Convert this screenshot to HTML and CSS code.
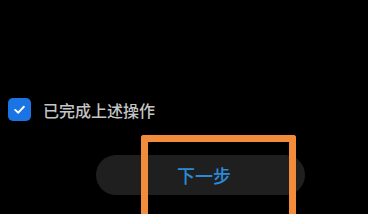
FILE: index.html
```html
<!DOCTYPE html>
<html lang="zh-CN">
<head>
    <meta charset="UTF-8">
    <meta name="viewport" content="width=device-width, initial-scale=1.0">
    <title>下一步</title>
    <link rel="stylesheet" href="styles.css">
</head>
<body>
    <div class="confirm-row">
        <span class="check-box">
            <svg viewBox="0 0 24 24" fill="none" stroke="#fff" stroke-width="2.4" stroke-linecap="round" stroke-linejoin="round">
                <polyline points="6.5 12.5 10.5 16 17.5 8.5"></polyline>
            </svg>
        </span>
        <span class="confirm-label">已完成上述操作</span>
    </div>

    <div class="next-wrap">
        <div class="next-btn">下一步</div>
        <div class="highlight"></div>
    </div>
</body>
</html>
```

FILE: styles.css
```css
body {
    margin: 0;
    padding: 98px 0 0 8px;
    width: 368px;
    height: 214px;
    box-sizing: border-box;
    background-color: #000;
    font-family: "Noto Sans CJK SC", "Noto Sans", sans-serif;
    overflow: hidden;
}
.confirm-row {
    display: flex;
    align-items: center;
    gap: 12px;
    height: 23px;
}
.check-box {
    width: 23px;
    height: 23px;
    border-radius: 5px;
    background-color: #1b74e4;
    display: flex;
    align-items: center;
    justify-content: center;
}
.check-box svg {
    width: 19px;
    height: 19px;
}
.confirm-label {
    font-size: 16px;
    font-weight: 500;
    color: #c4c4c4;
}
.next-wrap {
    position: relative;
    margin: 34px 0 0 88px;
    width: 209px;
}
.next-btn {
    height: 40px;
    border-radius: 20px;
    background-color: #1f1f1f;
    color: #2b8ad8;
    font-size: 18px;
    font-weight: 500;
    display: flex;
    align-items: center;
    justify-content: center;
    padding-left: 7px;
    box-sizing: border-box;
}
/* orange annotation frame drawn over the button, cut off by the window edge */
.highlight {
    position: absolute;
    left: 45px;
    top: -20px;
    width: 155px;
    height: 79px;
    box-sizing: border-box;
    border: 7px solid #f28b3a;
    border-bottom: none;
    border-radius: 3px 3px 0 0;
}
```
